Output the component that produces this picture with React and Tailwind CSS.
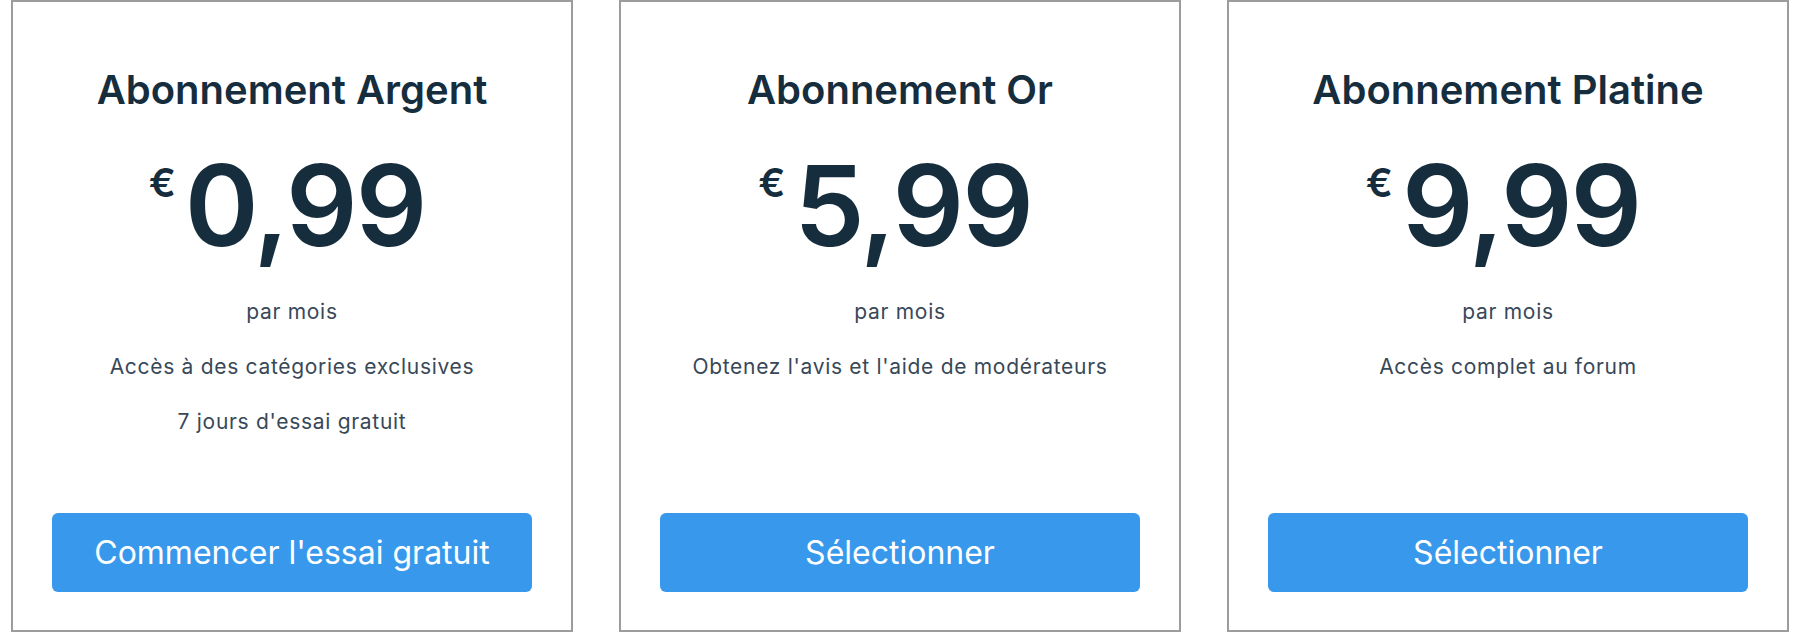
import React from "react";

const plans = [
  {
    title: "Abonnement Argent",
    price: "0,99",
    lines: ["Accès à des catégories exclusives", "7 jours d'essai gratuit"],
    cta: "Commencer l'essai gratuit",
  },
  {
    title: "Abonnement Or",
    price: "5,99",
    lines: ["Obtenez l'avis et l'aide de modérateurs"],
    cta: "Sélectionner",
  },
  {
    title: "Abonnement Platine",
    price: "9,99",
    lines: ["Accès complet au forum"],
    cta: "Sélectionner",
  },
];

function Card({ plan }) {
  return (
    <div className="flex h-[632px] flex-col items-center border-2 border-[#9c9c9c] bg-white px-[39px] pb-[38px] pt-[64px]">
      <h2 className="text-[40px] font-semibold leading-[48px] text-[#162d3d]">
        {plan.title}
      </h2>
      <div className="mt-[35px] flex items-start pr-[10px] text-[#162d3d]">
        <span className="mt-[14px] text-[40px] font-semibold leading-[40px]">€</span>
        <span className="ml-[9px] text-[112px] font-semibold leading-[112px] tracking-[-2px]">
          {plan.price}
        </span>
      </div>
      <div className="mt-[37px] flex flex-col items-center gap-[27px] text-[21px] leading-[28px] tracking-[0.7px] text-[#384858]">
        <p>par mois</p>
        {plan.lines.map((l) => (
          <p key={l}>{l}</p>
        ))}
      </div>
      <div className="flex-1" />
      <button className="flex h-[79px] w-full items-center justify-center rounded-[6px] bg-[#3899ec] text-[32px] font-normal text-white">
        {plan.cta}
      </button>
    </div>
  );
}

export default function App() {
  return (
    <div
      className="grid h-[632px] w-[1800px] grid-cols-3 gap-[46px] bg-white px-[11px]"
      style={{ fontFamily: "Inter, 'Noto Sans', sans-serif" }}
    >
      {plans.map((p) => (
        <Card key={p.title} plan={p} />
      ))}
    </div>
  );
}
